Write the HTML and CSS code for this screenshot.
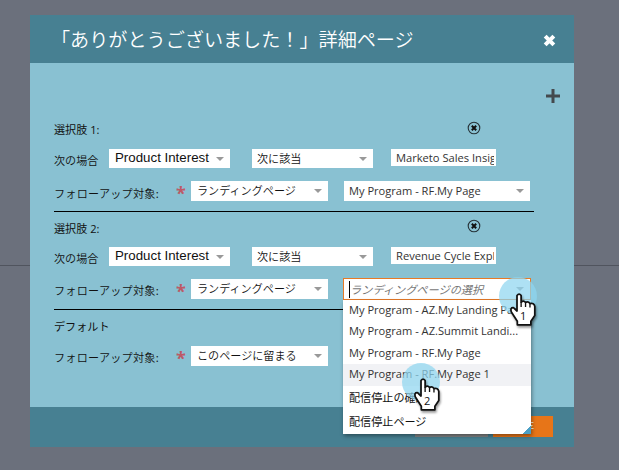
FILE: index.html
```html
<!DOCTYPE html>
<html lang="ja">
<head>
<meta charset="utf-8">
<title>「ありがとうございました！」詳細ページ</title>
<link rel="stylesheet" href="styles.css">
</head>
<body>
<svg class="defs" width="0" height="0">
  <symbol id="remove" viewBox="0 0 14 14"><circle cx="7" cy="7" r="5.8" fill="none" stroke="#263238" stroke-width="1.1"/><path d="M4.8 4.8l4.400 4.400M9.200 4.800l-4.400 4.400" stroke="#111" stroke-width="2"/></symbol>
  <symbol id="hand" viewBox="0 0 27 36"><path d="M6.700 2.500Q8.700-.3 10.700 2.500V9Q13 6.800 15 9.200Q17.500 7.600 19.300 10.300Q23.200 9.300 24 13V22L20.200 27.500V31H7V27.500L1.200 18.500Q-.2 14 3.200 14.300L6.700 17.500Z" fill="#fff" stroke="#111" stroke-width="1.700" stroke-linejoin="round"/><path d="M10.700 9v4.500M15 9.500v4M19.300 10.500v3.500" stroke="#111" stroke-width="1.300"/></symbol>
</svg>
<main class="dialog">
  <header class="header">
    <h1>「ありがとうございました！」詳細ページ</h1>
    <svg class="close" viewBox="0 0 12 12"><path d="M2 2l8 8M10 2l-8 8" stroke="#fff" stroke-width="3.700"/></svg>
  </header>
  <section class="content">
    <div class="tools"><svg class="plus" viewBox="0 0 14 14"><path d="M7 0v14M0 7h14" stroke="#444a4e" stroke-width="3"/></svg></div>
    <section class="choice">
      <div class="title"><span>選択肢 1:</span><svg class="remove"><use href="#remove"/></svg></div>
      <div class="row when"><label>次の場合</label><div class="select field"><span>Product Interest</span><i></i></div><div class="select operator"><span>次に該当</span><i></i></div><div class="value"><span>Marketo Sales Insight</span></div></div>
      <div class="row follow"><label>フォローアップ対象:</label><b>*</b><div class="select kind"><span>ランディングページ</span><i></i></div><div class="select page"><span>My Program - RF.My Page</span><i></i></div></div>
    </section>
    <section class="choice second">
      <div class="title"><span>選択肢 2:</span><svg class="remove"><use href="#remove"/></svg></div>
      <div class="row when"><label>次の場合</label><div class="select field"><span>Product Interest</span><i></i></div><div class="select operator"><span>次に該当</span><i></i></div><div class="value"><span>Revenue Cycle Explorer</span></div></div>
      <div class="row follow"><label>フォローアップ対象:</label><b>*</b><div class="select kind"><span>ランディングページ</span><i></i></div>
        <div class="select page active"><span>ランディングページの選択</span><i></i>
          <ul class="menu">
            <li>My Program - AZ.My Landing Page</li>
            <li>My Program - AZ.Summit Landi...</li>
            <li>My Program - RF.My Page</li>
            <li class="hover">My Program - RF.My Page 1</li>
            <li class="ja">配信停止の確認</li>
            <li class="ja">配信停止ページ</li>
          </ul>
        </div></div>
    </section>
    <section class="default">
      <div class="title"><span>デフォルト</span></div>
      <div class="row follow"><label>フォローアップ対象:</label><b>*</b><div class="select kind"><span>このページに留まる</span><i></i></div></div>
    </section>
  </section>
  <footer class="footer"><button class="cancel">キャンセル</button><button class="save">保存</button></footer>
</main>
<div class="pointer one"><svg><use href="#hand"/></svg><span>1</span></div>
<div class="pointer two"><svg><use href="#hand"/></svg><span>2</span></div>
</body>
</html>
```
FILE: styles.css
```css
* { box-sizing: border-box; }
body { margin: 0; height: 470px; overflow: hidden; padding: 15px 0 0 30px; background: linear-gradient(#50545e, #50545e) 0 265px / 100% 1px no-repeat #6b707c; font: 350 11.100px/16px "Noto Sans CJK JP", sans-serif; color: #111; }
.defs { position: absolute; }
.dialog { width: 544px; height: 432px; display: flex; flex-direction: column; background: #89c1d2; }
.header { height: 48px; flex: none; background: #478092; display: flex; align-items: center; justify-content: space-between; padding: 0 18px 0 21px; }
h1 { margin: 0; font-size: 19.130px; line-height: 28px; font-weight: 350; color: #fff; white-space: nowrap; }
.close { width: 13px; height: 13px; margin-top: 3px; }
.content { height: 344px; flex: none; padding: 0 40px 0 24px; }
.tools { height: 58px; display: flex; justify-content: flex-end; padding-top: 26px; margin-right: -26px; }
.plus { width: 14px; height: 14px; }
.title { height: 28px; display: flex; align-items: flex-start; justify-content: space-between; padding-right: 53px; font-family: "Open Sans", "Noto Sans CJK JP", sans-serif; font-weight: 400; line-height: 18px; }
.remove { width: 14px; height: 14px; }
.choice { height: 91px; border-bottom: 1px solid #000; }
.second { height: 98px; padding-top: 7px; }
.second .title { line-height: 20px; }
.choice .row { width: 480px; }
.row { display: flex; align-items: flex-start; white-space: nowrap; }
.when { height: 32px; }
.when label { width: 55px; padding-top: 3px; }
.follow label { width: 122px; padding-top: 4px; letter-spacing: .250px; }
.follow b { width: 15px; height: 20px; font: 700 18px/25px "Open Sans", sans-serif; color: #bd5966; }
.second .follow label, .default .follow label { padding-top: 3px; }
.select { background: #fff; height: 20px; display: flex; align-items: center; justify-content: space-between; padding: 0 6px; }
.select i { border: 4px solid transparent; border-top: 4px solid #999; border-bottom: 0; }
.field { width: 121px; height: 19px; font: 400 13.300px/18px "Liberation Sans", sans-serif; }
.field span { padding-bottom: 1px; }
.operator { width: 121px; height: 19px; margin-left: 22px; padding-left: 5px; }
.operator span, .kind span { padding-bottom: 2px; }
.value { width: 105px; height: 17px; margin-left: 18px; padding: 0 2px 0 5px; background: #fff; font: 400 11.150px/17px "Open Sans", sans-serif; color: #333; }
.value span { display: block; overflow: hidden; }
.kind { width: 137px; }
.page { width: 186px; margin-left: 16px; padding-left: 5px; font: 400 11.100px/18px "Open Sans", "Noto Sans CJK JP", sans-serif; color: #333; }
.active { position: relative; width: 188px; height: 22px; margin: -1px 0 0 15px; border: 1px solid #e67a27; color: #777; }
.active > span { font-style: italic; font-size: 11.200px; border-left: 1px solid #000; height: 17px; line-height: 17px; }
.menu { position: absolute; left: -1px; top: 21px; width: 188px; height: 134px; margin: 0; padding: 0; list-style: none; background: linear-gradient(135deg, transparent 50%, #4ba0c5 50%) right bottom / 8px 8px no-repeat #fff; color: #333; box-shadow: 1px 2px 4px #0006; }
.menu li { height: 21.400px; padding-left: 6px; line-height: 20.500px; overflow: hidden; }
.menu .hover { background: #f1f2f5; }
.menu .ja { height: 24px; line-height: 23px; color: #111; }
.default { padding-top: 8px; }
.footer { height: 40px; flex: none; background: #478092; display: flex; justify-content: flex-end; gap: 5px; padding: 9px 21px 0 0; }
.footer button { border: 0; padding: 0 0 2px; height: 21px; color: #fff; font: 400 11px/16px "Noto Sans CJK JP", sans-serif; }
.cancel { width: 73px; background: #808385; }
.save { width: 60px; background: #e77518; }
.pointer { position: absolute; width: 38px; height: 38px; border-radius: 50%; background: #8fd6f0b8; }
.pointer svg { position: absolute; left: 11px; top: 16px; width: 28px; height: 37px; filter: drop-shadow(1px 2px 1px #0006); }
.pointer span { position: absolute; left: 21px; top: 32px; font: 400 11px/14px "Open Sans", sans-serif; color: #111; }
.one { left: 499px; top: 277px; }
.two { left: 402px; top: 363px; }
.two svg { left: 11.500px; top: 15px; }
.two span { left: 22px; top: 31px; }
```
